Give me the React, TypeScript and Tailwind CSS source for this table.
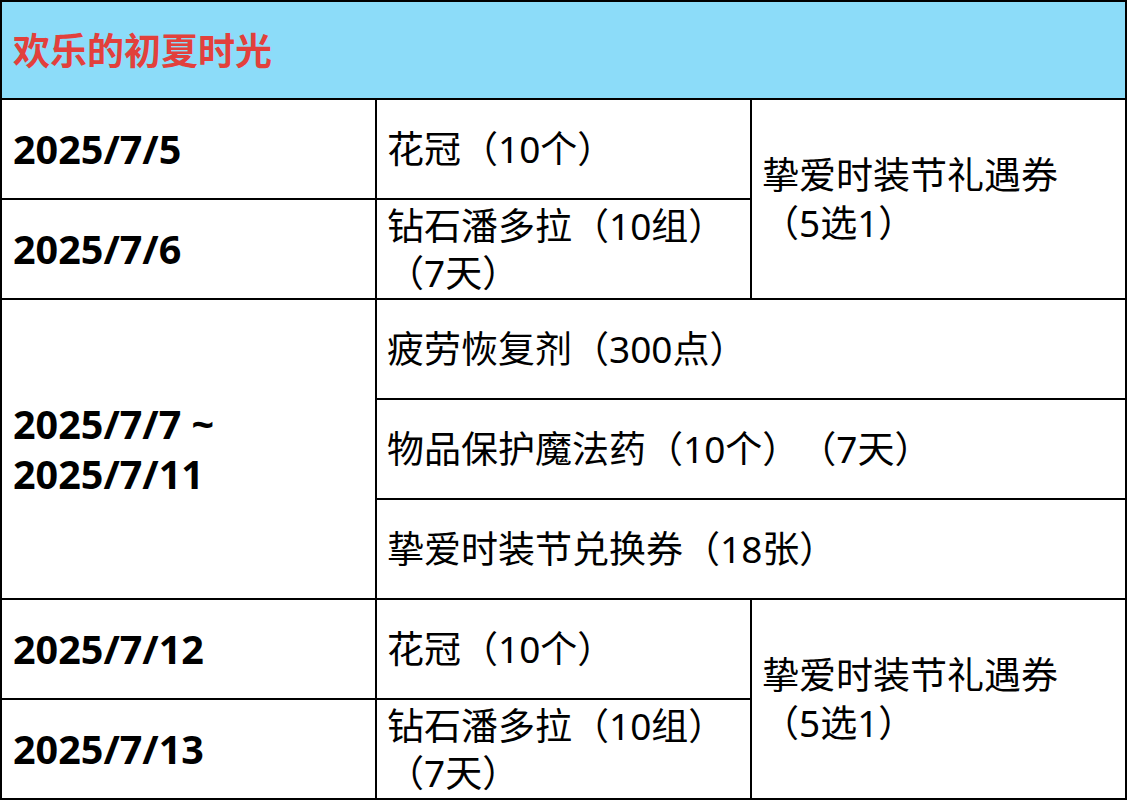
import React from "react";

const font = { fontFamily: '"Noto Sans", "Noto Sans CJK SC", sans-serif' };

function Cell({ className = "", children }: { className?: string; children: React.ReactNode }) {
  return (
    <div className={`bg-white flex items-center pl-[10px] pr-[6px] text-[37px] leading-[48px] text-black [text-spacing-trim:space-all] ${className}`}>
      <div>{children}</div>
    </div>
  );
}

function DateCell({ className = "", children }: { className?: string; children: React.ReactNode }) {
  return (
    <div className={`bg-white flex items-center pl-[11px] text-[39.5px] leading-[50px] font-bold text-black ${className}`}>
      <div>{children}</div>
    </div>
  );
}

export default function App() {
  return (
    <div className="bg-white w-[1128px] h-[803px]" style={font}>
      <div className="grid grid-cols-[373px_373px_373px] grid-rows-[96px_repeat(7,98px)] gap-[2px] p-[2px] bg-black w-fit">
        <div className="col-span-3 bg-[#8cdcf9] flex items-center pl-[11px]">
          <span className="text-[37px] font-bold text-[#e2403c] leading-none">欢乐的初夏时光</span>
        </div>

        <DateCell className="col-start-1 row-start-2">2025/7/5</DateCell>
        <Cell className="col-start-2 row-start-2">花冠（10个）</Cell>
        <Cell className="col-start-3 row-start-2 row-span-2">
          <div>挚爱时装节礼遇券</div>
          <div>（5选1）</div>
        </Cell>
        <DateCell className="col-start-1 row-start-3">2025/7/6</DateCell>
        <Cell className="col-start-2 row-start-3">
          <div className="leading-[47px]">钻石潘多拉（10组）</div>
          <div className="leading-[47px]">（7天）</div>
        </Cell>

        <DateCell className="col-start-1 row-start-4 row-span-3">
          <div>2025/7/7 ~</div>
          <div>2025/7/11</div>
        </DateCell>
        <Cell className="col-start-2 col-span-2 row-start-4">疲劳恢复剂（300点）</Cell>
        <Cell className="col-start-2 col-span-2 row-start-5">物品保护魔法药（10个）（7天）</Cell>
        <Cell className="col-start-2 col-span-2 row-start-6">挚爱时装节兑换券（18张）</Cell>

        <DateCell className="col-start-1 row-start-7">2025/7/12</DateCell>
        <Cell className="col-start-2 row-start-7">花冠（10个）</Cell>
        <Cell className="col-start-3 row-start-7 row-span-2">
          <div>挚爱时装节礼遇券</div>
          <div>（5选1）</div>
        </Cell>
        <DateCell className="col-start-1 row-start-8">2025/7/13</DateCell>
        <Cell className="col-start-2 row-start-8">
          <div className="leading-[47px]">钻石潘多拉（10组）</div>
          <div className="leading-[47px]">（7天）</div>
        </Cell>
      </div>
    </div>
  );
}
